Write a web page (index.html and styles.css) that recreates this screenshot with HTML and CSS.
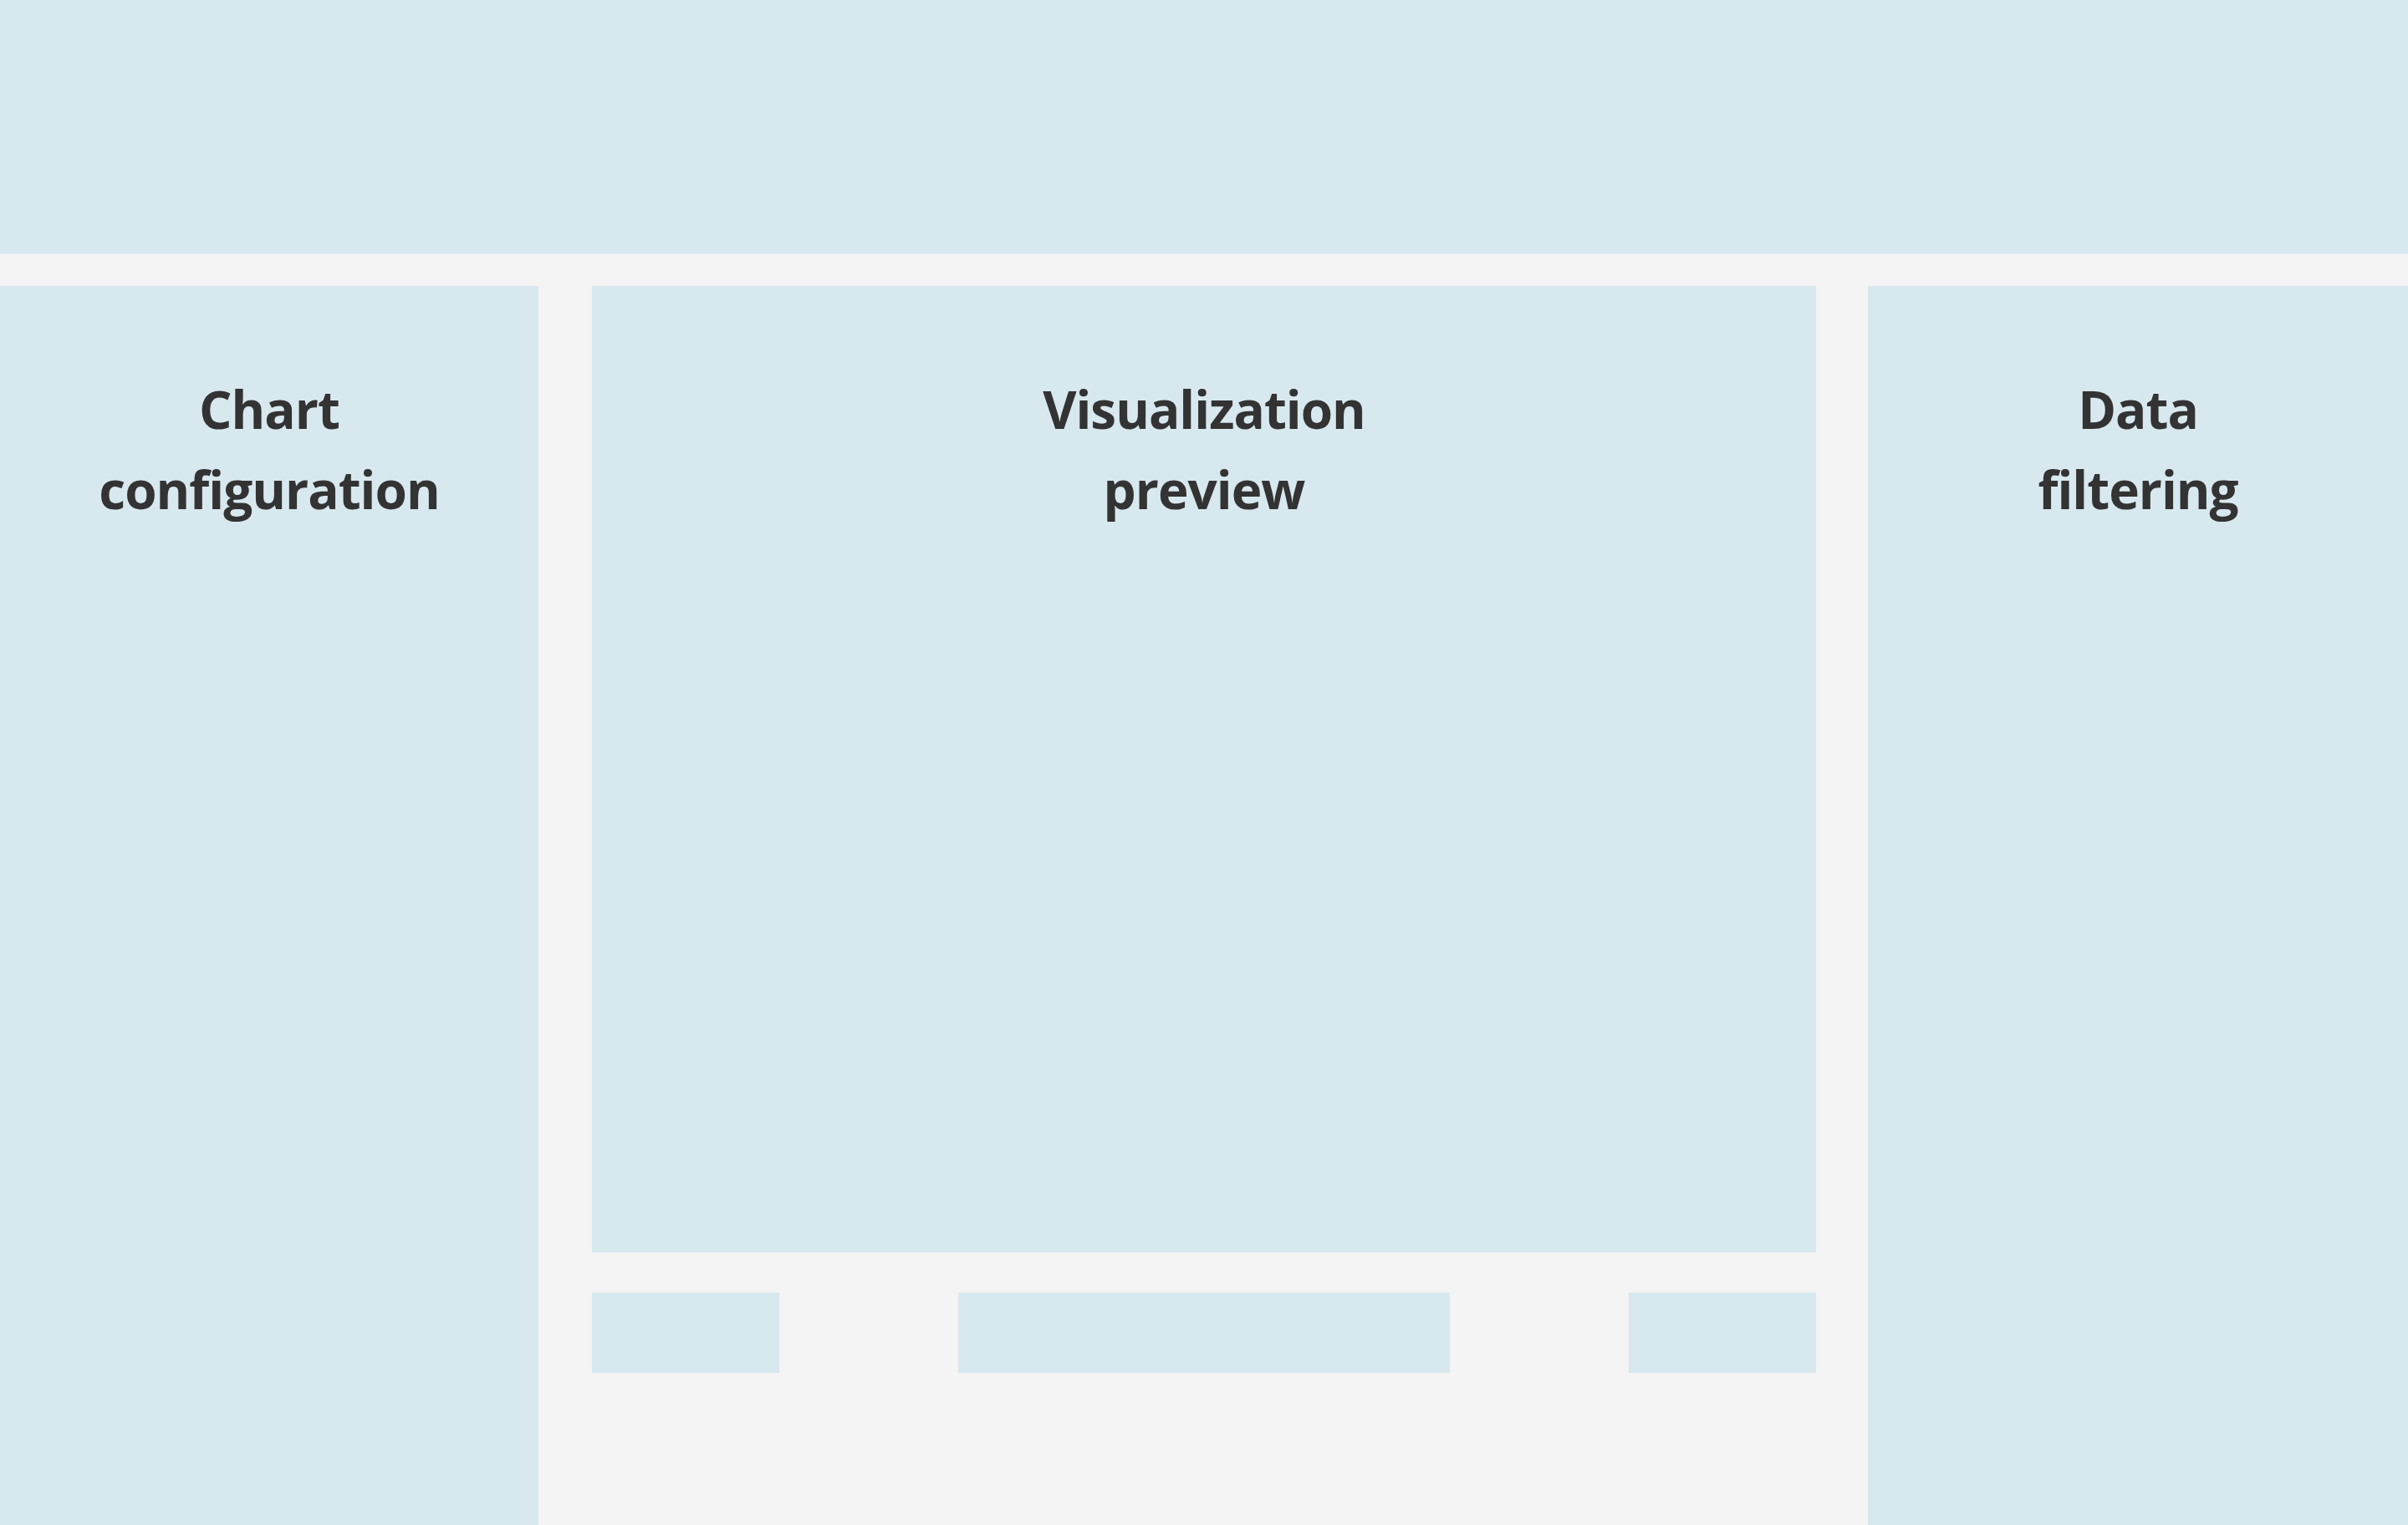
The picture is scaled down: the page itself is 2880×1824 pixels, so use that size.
FILE: index.html
```html
<!DOCTYPE html>
<html lang="en">
<head>
<meta charset="utf-8">
<title>Chart builder</title>
<link rel="stylesheet" href="styles.css">
</head>
<body>
<header class="topbar"></header>
<main class="workspace">
  <aside class="panel panel-left"><h2 class="panel-title">Chart<br>configuration</h2></aside>
  <section class="center">
    <div class="preview"><h2 class="panel-title">Visualization<br>preview</h2></div>
    <div class="actions">
      <div class="btn btn-small"></div>
      <div class="btn btn-wide"></div>
      <div class="btn btn-small"></div>
    </div>
  </section>
  <aside class="panel panel-right"><h2 class="panel-title">Data<br>filtering</h2></aside>
</main>
</body>
</html>
```
FILE: styles.css
```css
html, body {
  margin: 0;
  padding: 0;
}
body {
  width: 2880px;
  height: 1824px;
  background: #f4f4f4;
  font-family: "Open Sans", "Noto Sans", sans-serif;
  overflow: hidden;
}
.topbar {
  height: 304px;
  background: #d8e8ef;
}
.workspace {
  margin-top: 38px;
  height: 1482px;
  display: flex;
}
.panel {
  background: #d8e8ef;
  box-sizing: border-box;
  padding-top: 99px;
}
.panel-left {
  width: 644px;
}
.panel-right {
  flex: 1;
  margin-left: 62px;
}
.center {
  width: 1464px;
  margin-left: 64px;
  display: flex;
  flex-direction: column;
}
.preview {
  height: 1156px;
  background: #d8e8ef;
  box-sizing: border-box;
  padding-top: 99px;
}
.panel-title {
  margin: 0;
  text-align: center;
  font-size: 62px;
  line-height: 96px;
  letter-spacing: -1px;
  font-weight: 700;
  color: #333333;
}
.actions {
  margin-top: 48px;
  display: flex;
  justify-content: space-between;
}
.btn {
  height: 96px;
  background: #d8e8ef;
}
.btn-small {
  width: 224px;
}
.btn-wide {
  width: 588px;
}
```
